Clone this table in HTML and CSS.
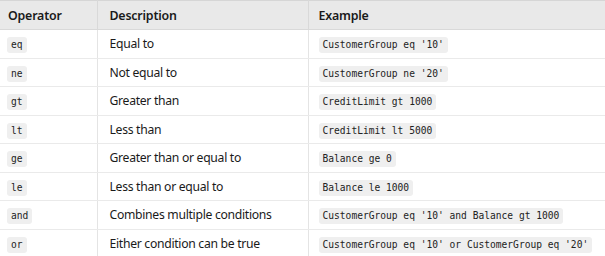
FILE: index.html
```html
<!DOCTYPE html>
<html>
<head>
<meta charset="utf-8">
<link rel="stylesheet" href="styles.css">
</head>
<body>
<table class="ops">
  <colgroup><col class="c1"><col class="c2"><col class="c3"></colgroup>
  <thead>
    <tr><th>Operator</th><th>Description</th><th>Example</th></tr>
  </thead>
  <tbody>
    <tr><td><code>eq</code></td><td>Equal to</td><td><code>CustomerGroup eq '10'</code></td></tr>
    <tr><td><code>ne</code></td><td>Not equal to</td><td><code>CustomerGroup ne '20'</code></td></tr>
    <tr><td><code>gt</code></td><td>Greater than</td><td><code>CreditLimit gt 1000</code></td></tr>
    <tr><td><code>lt</code></td><td>Less than</td><td><code>CreditLimit lt 5000</code></td></tr>
    <tr><td><code>ge</code></td><td>Greater than or equal to</td><td><code>Balance ge 0</code></td></tr>
    <tr><td><code>le</code></td><td>Less than or equal to</td><td><code>Balance le 1000</code></td></tr>
    <tr><td><code>and</code></td><td>Combines multiple conditions</td><td><code>CustomerGroup eq '10' and Balance gt 1000</code></td></tr>
    <tr><td><code>or</code></td><td>Either condition can be true</td><td><code>CustomerGroup eq '10' or CustomerGroup eq '20'</code></td></tr>
  </tbody>
</table>
</body>
</html>
```
FILE: styles.css
```css
html, body {
  margin: 0;
  padding: 0;
  background: #ffffff;
}
.ops {
  border-collapse: collapse;
  width: 620px;
  table-layout: fixed;
  font-family: "Noto Sans", "Open Sans", sans-serif;
  font-size: 12.2px;
  letter-spacing: -0.3px;
  color: #1a1a1a;
}
.c1 { width: 97px; }
.c2 { width: 211px; }
.c3 { width: 312px; }
.ops th {
  background: #e9e9e9;
  text-align: left;
  font-weight: 600;
  font-size: 12.4px;
  letter-spacing: -0.2px;
  height: 28px;
  padding: 0 0 0 8px;
  border-top: 1px solid #d6d6d6;
  border-right: 1px solid #d9d9d9;
  border-bottom: 1px solid #d9d9d9;
}
.ops th:nth-child(2), .ops td:nth-child(2) { padding-left: 12px; }
.ops th:nth-child(3), .ops td:nth-child(3) { padding-left: 10px; }
.ops td {
  height: 27.5px;
  padding: 0 0 0 7px;
  border-bottom: 1px solid #eaeaea;
  border-right: 1px solid #e4e4e4;
  vertical-align: middle;
}
.ops code {
  font-family: "DejaVu Sans Mono", monospace;
  font-size: 9.6px;
  letter-spacing: 0;
  background: #efefef;
  border-radius: 3px;
  padding: 2px 4px 3px;
  color: #222222;
}
```
